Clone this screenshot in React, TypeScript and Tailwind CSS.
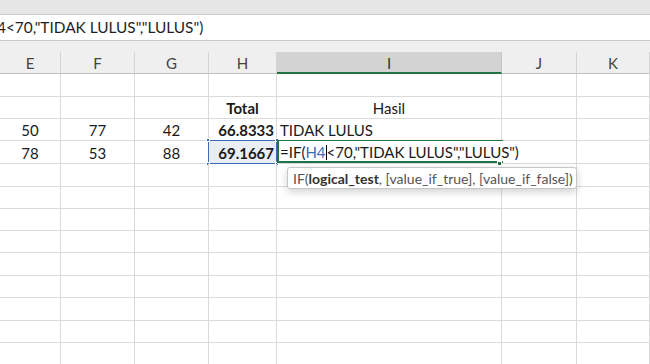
import React from 'react'

const COLS = [
  { key: 'E', w: 61 },
  { key: 'F', w: 74 },
  { key: 'G', w: 74 },
  { key: 'H', w: 68 },
  { key: 'I', w: 225 },
  { key: 'J', w: 75 },
  { key: 'K', w: 73 },
]

const ROW_HEIGHTS = [23, 22, 22, 23, 23, 22, 22, 22, 23, 22, 23, 22, 22]

type Cell = { text: string, bold?: boolean, align?: 'left' | 'center' | 'right' }

const DATA: Record<string, Cell> = {
  'H1': { text: 'Total', bold: true, align: 'center' },
  'I1': { text: 'Hasil', align: 'center' },
  'E2': { text: '50', align: 'center' },
  'F2': { text: '77', align: 'center' },
  'G2': { text: '42', align: 'center' },
  'H2': { text: '66.8333', bold: true, align: 'right' },
  'I2': { text: 'TIDAK LULUS', align: 'left' },
  'E3': { text: '78', align: 'center' },
  'F3': { text: '53', align: 'center' },
  'G3': { text: '88', align: 'center' },
  'H3': { text: '69.1667', bold: true, align: 'right' },
}

const font = { fontFamily: 'Lato, "Open Sans", sans-serif' }

function Handle({ className }: { className: string }) {
  return <span className={`absolute w-[4px] h-[4px] bg-[#3d6db5] border border-white ${className}`} />
}

function FormulaBar() {
  return (
    <div>
      <div className="h-[14px] bg-[#e6e6e6]" />
      <div className="h-[27px] bg-white border-t border-b border-[#c9c9c9] overflow-hidden flex items-center">
        <span className="whitespace-nowrap text-[15.4px] text-[#1f1f1f] -ml-[3px]">4&lt;70,"TIDAK LULUS","LULUS")</span>
      </div>
      <div className="h-[11px] bg-[#efefef]" />
    </div>
  )
}

function HeaderRow() {
  return (
    <div className="flex h-[22px]">
      {COLS.map(c => (
        <div
          key={c.key}
          style={{ width: c.w }}
          className={
            c.key === 'I'
              ? 'shrink-0 flex items-center justify-center pt-[2px] bg-[#d3d3d3] border-r border-[#c4c4c4] border-b-2 border-b-[#217346] text-[15px] text-[#333]'
              : 'shrink-0 flex items-center justify-center pt-[2px] bg-[#efefef] border-r border-[#d4d4d4] border-b border-b-[#c0c0c0] text-[15px] text-[#444]'
          }
        >
          {c.key}
        </div>
      ))}
    </div>
  )
}

function EditingCell() {
  return (
    <>
      <div className="absolute left-0 top-[-1px] h-[23px] w-[226px] border-l-2 border-t border-b-2 border-[#217346] z-20 pointer-events-none" />
      <span className="absolute right-[-1px] bottom-[-3px] w-[5px] h-[5px] bg-[#217346] border border-white z-30" />
      <div className="absolute left-0 top-0 h-[21px] w-[252px] bg-white z-10 flex items-center pl-[3px] pt-[2px] whitespace-nowrap text-[15px] text-[#1a1a1a]">
        <span>=IF(</span>
        <span className="text-[#3c6eb4]">H4</span>
        <span className="w-px h-[15px] bg-black" />
        <span>&lt;70,"TIDAK LULUS","LULUS")</span>
      </div>
    </>
  )
}

function Tooltip() {
  return (
    <div className="absolute left-[287px] top-[93px] h-[22px] w-[290px] bg-white border border-[#c6c6c6] rounded-[3px] shadow-[0_3px_8px_rgba(0,0,0,0.18)] z-40 flex items-center px-[5px] whitespace-nowrap text-[14px] text-[#555]">
      IF(<b className="font-bold text-[#333]">logical_test</b>, [value_if_true], [value_if_false])
    </div>
  )
}

function Grid() {
  return (
    <div className="relative">
      {ROW_HEIGHTS.map((h, r) => (
        <div key={r} className="flex" style={{ height: h }}>
          {COLS.map((c) => {
            const id = `${c.key}${r}`
            const cell = DATA[id]
            const isH4 = c.key === 'H' && r === 3
            const isI4 = c.key === 'I' && r === 3
            return (
              <div
                key={c.key}
                style={{ width: c.w }}
                className={`relative shrink-0 border-r border-b border-[#dadada] flex items-center pt-[2px] text-[15px] text-[#1a1a1a] ${isH4 ? 'bg-[#e9eef6]' : ''} ${
                  cell?.align === 'center' ? 'justify-center' : cell?.align === 'right' ? 'justify-end pr-[2px]' : 'justify-start pl-[3px]'
                }`}
              >
                {cell && <span className={cell.bold ? 'font-bold' : ''}>{cell.text}</span>}
                {isH4 && (
                  <>
                    <div className="absolute inset-[-1px] border border-[#3d6db5] pointer-events-none" />
                    <Handle className="left-[-3px] top-[-3px]" />
                    <Handle className="right-[-3px] top-[-3px]" />
                    <Handle className="left-[-3px] bottom-[-3px]" />
                    <Handle className="right-[-3px] bottom-[-3px]" />
                  </>
                )}
                {isI4 && <EditingCell />}
              </div>
            )
          })}
        </div>
      ))}
      <Tooltip />
    </div>
  )
}

export default function App() {
  return (
    <div className="w-[650px] h-[364px] overflow-hidden bg-white" style={font}>
      <FormulaBar />
      <HeaderRow />
      <Grid />
    </div>
  )
}
